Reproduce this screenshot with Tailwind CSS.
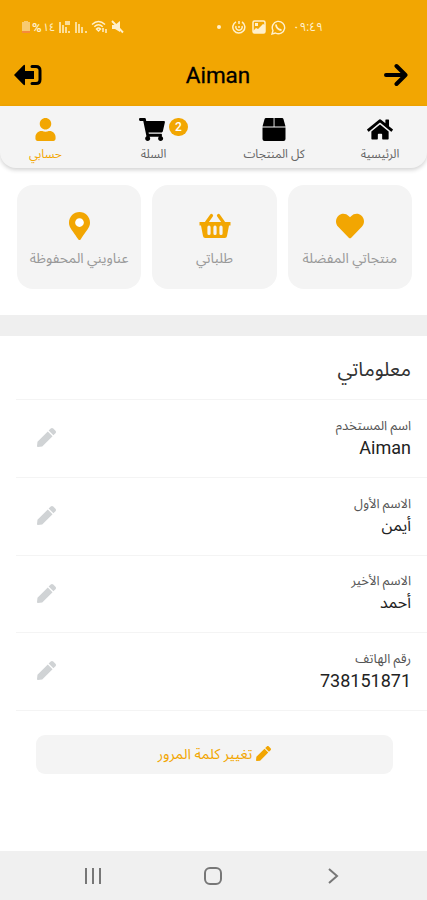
<!DOCTYPE html>
<html lang="ar" dir="rtl">
<head>
  <meta charset="UTF-8" />
  <meta name="viewport" content="width=device-width, initial-scale=1.0" />
  <title>حسابي</title>
  <script src="https://cdn.jsdelivr.net/npm/@tailwindcss/browser@4"></script>
</head>
<body class="bg-white text-[#222] font-[Roboto,'Noto_Sans_Arabic','DejaVu_Sans',sans-serif]">
  <svg class="hidden">
    <symbol id="pen" viewBox="0 0 512 512"><path d="M290.74 93.24l128.02 128.02-277.99 277.99-114.14 12.6C11.35 513.54-1.56 500.62.14 485.34l12.7-114.22 277.9-277.88zm207.2-19.06l-60.11-60.11c-18.75-18.75-49.16-18.75-67.91 0l-56.55 56.55 128.02 128.02 56.55-56.55c18.75-18.76 18.75-49.16 0-67.91z"/></symbol>
  </svg>

  <div class="w-[427px] h-[900px] flex flex-col overflow-hidden">
    <header class="h-[106px] shrink-0 bg-[#f2a602]">
      <!-- Barra de estado -->
      <div dir="ltr" class="h-[50px] pt-1 pl-[22px] pr-[104px] flex items-center justify-between text-[#fff0cc]">
        <div class="flex items-center">
          <svg class="w-[8px] h-[13px]" viewBox="0 0 8 13"><path fill="#f8ca70" d="M2 0h4v1h2v9H0V1h2z"/><path fill="#f58a3c" d="M0 10h8v2H0z"/></svg>
          <span class="ml-[2px] text-[13px] font-bold leading-none">%</span>
          <span class="ml-px text-[11px] leading-none">١٤</span>
          <svg class="ml-[3px] w-[14px] h-[14px]" viewBox="0 0 14 14" fill="currentColor"><path d="M1 2h2v11H1zM4 5h2v8H4zM7 7h2v6H7zM10 11h2v2h-2zM7 1h5v4H7z" opacity=".75"/></svg>
          <svg class="ml-[2px] w-[13px] h-[14px]" viewBox="0 0 13 14" fill="currentColor"><path d="M1 2h2v11H1zM4 4h2v9H4zM7 7h2v6H7zM11 11h2v2h-2z" opacity=".75"/></svg>
          <svg class="ml-[4px] w-[17px] h-[14px]" viewBox="0 0 17 14" fill="none" stroke="currentColor" stroke-width="1.5"><path d="M1 4.500Q7.500-1.500 14 4.500M3.300 6.800q4.200-4 8.400 0M5.500 9q2-2 4 0L7.500 11zM12 8v4M15 9v4"/></svg>
          <svg class="ml-[3px] w-[13px] h-[14px]" viewBox="0 0 13 14"><path fill="currentColor" d="M1 5h3l5-4v11L4 9H1z"/><path stroke="currentColor" stroke-width="1.900" d="M1 1l11 11.500"/></svg>
        </div>
        <div class="flex items-center">
          <span class="w-1 h-1 rounded-full bg-[#fff0cc]"></span>
          <svg class="ml-[11px] w-[14px] h-[14px]" viewBox="0 0 14 14" fill="none" stroke="currentColor" stroke-width="1.500"><path d="M4 1.800a6 6 0 1 0 6 .2"/><path d="M7 1v3M4 6a3.200 3.200 0 1 0 6 0M7 6v2"/></svg>
          <svg class="ml-[6px] w-[14px] h-[14px]" viewBox="0 0 14 14"><rect x="1" y="1" width="12" height="12" rx="1.500" fill="none" stroke="currentColor" stroke-width="1.500"/><path fill="currentColor" d="M1 11l3-3 2 1 5-5 2 1v8H1zM3 3h3v3H3z"/></svg>
          <svg class="ml-[5px] w-[15px] h-[15px]" viewBox="0 0 15 15" fill="none" stroke="currentColor" stroke-width="1.400"><path d="M1 14l1-3.500A6.200 6.200 0 1 1 4.500 13z"/><path stroke-width="1.800" d="M5 4.500c0 3 2.500 5.500 5.500 5.500"/></svg>
          <span class="ml-[7px] text-[12px] leading-none">٠٩:٤٩</span>
        </div>
      </div>
      <div class="h-[50px] px-[14px] flex items-center justify-between text-black">
        <svg class="w-6 h-6 mr-[5px]" viewBox="0 0 24 24" fill="none" stroke="currentColor" stroke-width="4" stroke-linecap="round" stroke-linejoin="round"><path d="M2 12h18M12.500 3l9 9-9 9"/></svg>
        <h1 class="ml-[10px] text-[22.5px] font-normal leading-none [-webkit-text-stroke:0.3px]">Aiman</h1>
        <svg class="w-7 h-[22px]" viewBox="0 0 28 22"><path fill="currentColor" d="M0 11L9.500 1.200Q11 0 11 2v5h9v8h-9v5q0 2-1.500.800z"/><path fill="none" stroke="currentColor" stroke-width="3" stroke-linecap="round" d="M18 2.500h4q4 0 4 4v9q0 4-4 4h-4"/></svg>
      </div>
    </header>

    <nav class="h-[62px] shrink-0 flex pt-[12px] bg-[#f4f4f4] rounded-b-[16px] shadow-[0_2px_4px_rgba(0,0,0,0.18)] text-[12px] text-[#666]">
      <a class="w-[94px] flex flex-col items-center gap-[4px]">
        <svg class="w-[26px] h-[23px] text-black" viewBox="0 0 576 512" fill="currentColor"><path d="M280.370 148.260L96 300.110V464a16 16 0 0 0 16 16l112.060-.290a16 16 0 0 0 15.920-16V368a16 16 0 0 1 16-16h64a16 16 0 0 1 16 16v95.640a16 16 0 0 0 16 16.050L464 480a16 16 0 0 0 16-16V300L295.670 148.260a12.190 12.190 0 0 0-15.300 0zM571.600 251.470L488 182.560V44.050a12 12 0 0 0-12-12h-56a12 12 0 0 0-12 12v72.610L318.470 43a48 48 0 0 0-61 0L4.340 251.470a12 12 0 0 0-1.600 16.900l25.500 31A12 12 0 0 0 45.150 301l235.220-193.740a12.190 12.190 0 0 1 15.300 0L530.900 301a12 12 0 0 0 16.900-1.600l25.500-31a12 12 0 0 0-1.700-16.930z"/></svg>
        <span class="leading-[18px] whitespace-nowrap">الرئيسية</span>
      </a>
      <a class="w-[118px] flex flex-col items-center gap-[4px]">
        <svg class="w-6 h-[23px] text-black" viewBox="0 0 24 23" fill="currentColor"><path d="M4 0h7.600v8.500H.5L2.500 1.200Q2.800 0 4 0zM12.500 0H20q1.200 0 1.500 1.200l2 7.300H12.500zM.5 9.500h23v11.500q0 2-2 2h-19q-2 0-2-2z"/></svg>
        <span class="leading-[18px] whitespace-nowrap">كل المنتجات</span>
      </a>
      <a class="relative w-[123px] flex flex-col items-center gap-[4px]">
        <svg class="mr-[3px] w-[26px] h-[23px] text-black" viewBox="0 0 576 512" fill="currentColor"><path d="M528.120 301.319l47.273-208C578.806 78.301 567.391 64 551.990 64H159.208l-9.166-44.810C147.758 8.021 137.930 0 126.529 0H24C10.745 0 0 10.745 0 24v16c0 13.255 10.745 24 24 24h69.883l70.248 343.435C147.325 417.100 136 435.222 136 456c0 30.928 25.072 56 56 56s56-25.072 56-56c0-15.674-6.447-29.835-16.824-40h209.647C430.447 426.165 424 440.326 424 456c0 30.928 25.072 56 56 56s56-25.072 56-56c0-22.172-12.888-41.332-31.579-50.405l5.517-24.276c3.413-15.018-8.002-29.319-23.403-29.319H218.117l-6.545-32h293.145c11.206 0 20.920-7.754 23.403-18.681z"/></svg>
        <span class="leading-[18px] whitespace-nowrap">السلة</span>
        <span class="absolute left-[77px] top-0 w-[19px] h-[18px] rounded-full bg-[#f2a602] text-white text-[12px] font-medium flex items-center justify-center">2</span>
      </a>
      <a class="w-[92px] pr-px flex flex-col items-center gap-[4px] text-[#f2a602]">
        <svg class="w-[21px] h-[23px]" viewBox="0 0 448 512" fill="currentColor"><path d="M224 256c70.700 0 128-57.300 128-128S294.700 0 224 0 96 57.300 96 128s57.300 128 128 128zm89.600 32h-16.700c-22.200 10.200-46.900 16-72.900 16s-50.600-5.800-72.900-16h-16.700C60.200 288 0 348.200 0 422.400V464c0 26.500 21.500 48 48 48h352c26.500 0 48-21.500 48-48v-41.600c0-74.200-60.200-134.400-134.400-134.400z"/></svg>
        <span class="leading-[18px] whitespace-nowrap">حسابي</span>
      </a>
    </nav>

    <!-- Accesos rápidos -->
    <section class="h-[147px] shrink-0 pt-[17px] pr-[15px] pl-[17px] flex gap-[11px] text-[14px] text-[#999]">
      <div class="flex-1 h-[104px] rounded-[16px] bg-[#f4f4f4] flex flex-col items-center pt-[27px] gap-[8px]">
        <svg class="w-7 h-7 text-[#f2a602]" viewBox="0 0 512 512" fill="currentColor"><path d="M462.300 62.600C407.500 15.900 326 24.300 275.700 76.200L256 96.500l-19.700-20.300C186.100 24.300 104.500 15.900 49.700 62.600c-62.800 53.600-66.100 149.800-9.900 207.900l193.500 199.800c12.500 12.900 32.800 12.900 45.300 0l193.500-199.800c56.300-58.100 53-154.300-9.800-207.900z"/></svg>
        <span class="leading-5 whitespace-nowrap">منتجاتي المفضلة</span>
      </div>
      <div class="flex-1 h-[104px] rounded-[16px] bg-[#f4f4f4] flex flex-col items-center pt-[27px] gap-[8px]">
        <svg class="w-8 h-7 text-[#f2a602]" viewBox="0 0 32 28"><path fill="currentColor" d="M.5 10h31v3.500h-1.500l-2 10.500q-.3 2-2.200 2H6.200q-1.900 0-2.200-2l-2-10.500H.5z"/><path fill="none" stroke="currentColor" stroke-width="3.200" stroke-linecap="round" d="M7.500 10.500l5-7M24.500 10.500l-5-7"/><path fill="none" stroke="#f4f4f4" stroke-width="3.200" stroke-linecap="round" d="M10 15.200v6.300M16 15.200v6.300M22 15.200v6.300"/></svg>
        <span class="leading-5 whitespace-nowrap">طلباتي</span>
      </div>
      <div class="flex-1 h-[104px] rounded-[16px] bg-[#f4f4f4] flex flex-col items-center pt-[27px] gap-[8px]">
        <svg class="w-[21px] h-7 text-[#f2a602]" viewBox="0 0 384 512" fill="currentColor"><circle cx="192" cy="192" r="90" fill="#fff"/><path d="M172.268 501.670C26.970 291.031 0 269.413 0 192 0 85.961 85.961 0 192 0s192 85.961 192 192c0 77.413-26.970 99.031-172.268 309.670-9.535 13.774-29.930 13.773-39.464 0zM192 272c44.183 0 80-35.817 80-80s-35.817-80-80-80-80 35.817-80 80 35.817 80 80 80z"/></svg>
        <span class="leading-5 whitespace-nowrap">عناويني المحفوظة</span>
      </div>
    </section>
    <div class="h-[21px] shrink-0 bg-[#efefef]"></div>

    <!-- Datos del usuario -->
    <section class="shrink-0 pl-4">
      <h2 class="h-[64px] pt-[2px] pr-4 flex items-center border-b border-[#f4f4f4] text-[20px] text-[#333]">معلوماتي</h2>
      <div class="h-[78px] pb-[2px] pr-4 pl-[21px] flex items-center justify-between border-b border-[#f4f4f4]">
        <div>
          <p class="text-[13px] leading-5 text-[#555]">اسم المستخدم</p>
          <p class="text-[18px] leading-6">Aiman</p>
        </div>
        <svg class="w-[19px] h-[19px] fill-[#d0d3d5]"><use href="#pen"/></svg>
      </div>
      <div class="h-[78px] pb-[2px] pr-4 pl-[21px] flex items-center justify-between border-b border-[#f4f4f4]">
        <div>
          <p class="text-[13px] leading-5 text-[#555]">الاسم الأول</p>
          <p class="text-[16px] leading-6">أيمن</p>
        </div>
        <svg class="w-[19px] h-[19px] fill-[#d0d3d5]"><use href="#pen"/></svg>
      </div>
      <div class="h-[77px] pb-[2px] pr-4 pl-[21px] flex items-center justify-between border-b border-[#f4f4f4]">
        <div>
          <p class="text-[13px] leading-5 text-[#555]">الاسم الأخير</p>
          <p class="text-[16px] leading-6">أحمد</p>
        </div>
        <svg class="w-[19px] h-[19px] fill-[#d0d3d5]"><use href="#pen"/></svg>
      </div>
      <div class="h-[78px] pb-[2px] pr-4 pl-[21px] flex items-center justify-between border-b border-[#f4f4f4]">
        <div>
          <p class="text-[13px] leading-5 text-[#555]">رقم الهاتف</p>
          <p class="text-[18px] leading-6">738151871</p>
        </div>
        <svg class="w-[19px] h-[19px] fill-[#d0d3d5]"><use href="#pen"/></svg>
      </div>
    </section>

    <button class="mt-[24px] mr-[34px] w-[357px] h-[39px] shrink-0 rounded-[9px] bg-[#f4f4f4] flex items-center justify-center gap-[4px] text-[14.5px] text-[#f2a602]">
      <svg class="w-[15px] h-[15px] -mt-[3px] fill-[#f2a602]"><use href="#pen"/></svg>
      <span class="whitespace-nowrap">تغيير كلمة المرور</span>
    </button>

    <!-- Botones del sistema -->
    <footer class="mt-auto h-[49px] shrink-0 pr-[83px] pl-[80px] bg-[#f0f0f0] flex items-center justify-between text-[#777]">
      <svg class="w-6 h-5" viewBox="0 0 24 20" fill="none" stroke="currentColor" stroke-width="2"><path d="M9 3l8 7-8 7"/></svg>
      <svg class="w-[18px] h-[18px]" viewBox="0 0 18 18" fill="none" stroke="currentColor" stroke-width="2"><rect x="1" y="1" width="16" height="16" rx="5"/></svg>
      <svg class="w-[26px] h-4" viewBox="0 0 26 16" fill="none" stroke="currentColor" stroke-width="2"><path d="M6 0v16M13 0v16M20 0v16"/></svg>
    </footer>
  </div>
</body>
</html>
